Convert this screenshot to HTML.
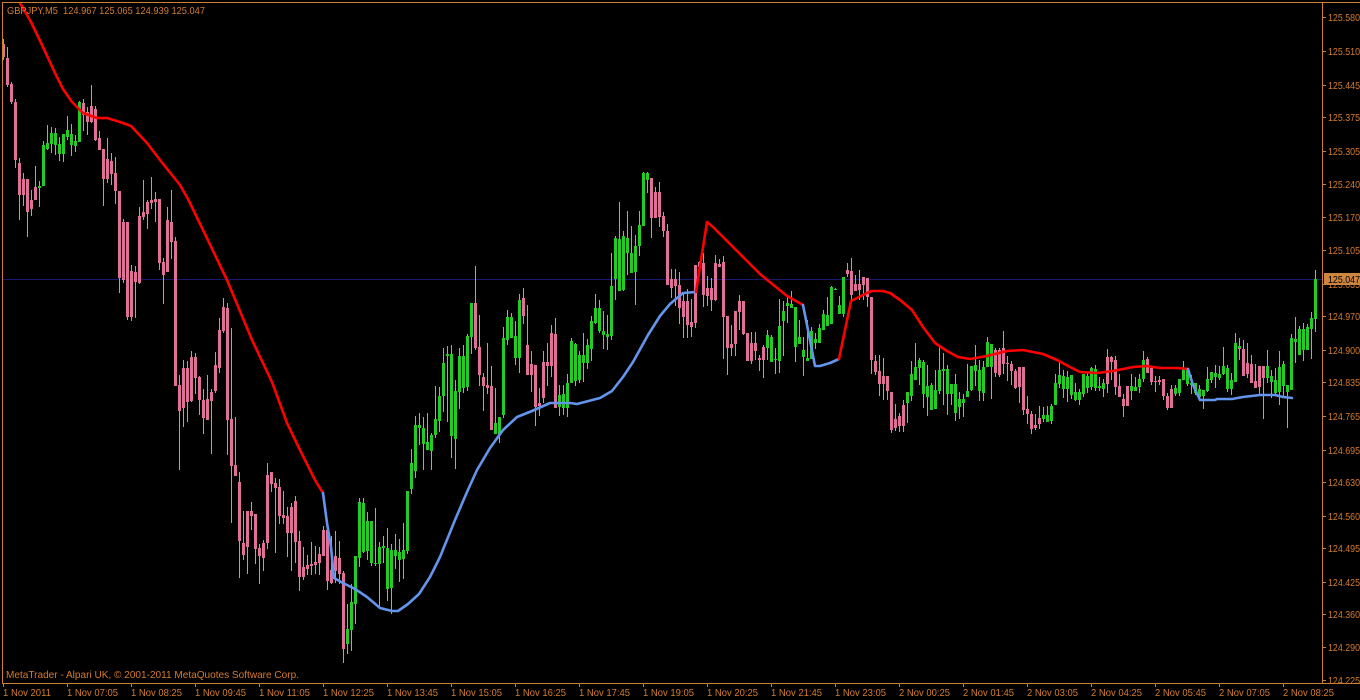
<!DOCTYPE html>
<html><head><meta charset="utf-8"><title>GBPJPY,M5</title>
<style>
html,body{margin:0;padding:0;background:#000;width:1360px;height:700px;overflow:hidden}
svg{display:block;position:absolute;left:0;top:0}
text{font-family:"Liberation Sans",sans-serif;font-size:10.5px;fill:#D67C2C}
.c{shape-rendering:crispEdges;fill:none}
</style></head><body>
<svg width="1360" height="700" viewBox="0 0 1360 700" xmlns="http://www.w3.org/2000/svg">
<rect width="1360" height="700" fill="#000"/>
<path class="c" stroke="#191970" stroke-width="1" d="M3 279.5H1322"/>
<path class="c" stroke="#DAA520" stroke-width="1" d="M3.5 39V60M7.5 47V87M11.5 82V104M15.5 99V168M19.5 158V220M23.5 173V206M27.5 179V237M31.5 190V216M35.5 166V200M39.5 181V207M43.5 141V186M47.5 125V150M51.5 127V153M55.5 128V155M59.5 137V161M63.5 134V162M67.5 116V140M71.5 124V156M75.5 135V152M79.5 101V142M83.5 99V131M87.5 107V135M91.5 85V123M95.5 106V141M99.5 131V150M103.5 149V206M107.5 138V183M111.5 153V185M115.5 157V204M119.5 191V293M123.5 219V283M127.5 222V320M131.5 265V321M135.5 266V318M139.5 207V284M143.5 180V220M147.5 200V229M151.5 177V209M155.5 192V222M159.5 199V270M163.5 258V304M167.5 207V272M171.5 190V259M175.5 237V386M179.5 375V470M183.5 360V427M187.5 361V422M191.5 351V402M195.5 353V394M199.5 376V415M203.5 389V434M207.5 375V420M211.5 389V454M215.5 352V393M219.5 318V373M223.5 298V333M227.5 303V455M231.5 328V523M235.5 417V476M239.5 472V578M243.5 511V560M247.5 511V574M251.5 502V530M255.5 514V564M259.5 544V584M263.5 540V571M267.5 463V549M271.5 472V492M275.5 478V553M279.5 479V524M283.5 491V524M287.5 507V557M291.5 503V571M295.5 496V563M299.5 531V591M303.5 547V580M307.5 555V575M311.5 542V575M315.5 546V574M319.5 547V575M323.5 526V556M327.5 526V590M331.5 536V584M335.5 531V583M339.5 541V584M343.5 571V663M347.5 604V654M351.5 584V651M355.5 556V624M359.5 498V567M363.5 498V553M367.5 512V560M371.5 521V566M375.5 508V566M379.5 542V608M383.5 536V563M387.5 528V601M391.5 544V614M395.5 534V569M399.5 539V582M403.5 523V579M407.5 491V554M411.5 449V494M415.5 416V478M419.5 413V445M423.5 417V470M427.5 413V450M431.5 433V470M435.5 386V438M439.5 387V432M443.5 348V412M447.5 346V422M451.5 345V458M455.5 380V469M459.5 348V409M463.5 345V393M467.5 334V391M471.5 303V354M475.5 266V350M479.5 315V386M483.5 373V411M487.5 343V394M491.5 366V430M495.5 388V434M499.5 417V443M503.5 327V418M507.5 310V345M511.5 313V338M515.5 321V365M519.5 294V373M523.5 288V324M527.5 305V375M531.5 351V392M535.5 365V426M539.5 388V416M543.5 351V403M547.5 343V386M551.5 325V377M555.5 318V408M559.5 385V416M563.5 385V415M567.5 374V417M571.5 338V383M575.5 343V386M579.5 351V383M583.5 333V382M587.5 339V369M591.5 316V361M595.5 294V324M599.5 300V333M603.5 311V349M607.5 315V350M611.5 253V340M615.5 236V300M619.5 202V291M623.5 231V291M627.5 211V275M631.5 226V273M635.5 235V305M639.5 211V256M643.5 172V226M647.5 172V193M651.5 178V238M655.5 187V218M659.5 182V227M663.5 212V237M667.5 224V285M671.5 269V298M675.5 269V306M679.5 272V324M683.5 292V338M687.5 289V338M691.5 299V337M695.5 265V328M699.5 261V270M703.5 253V307M707.5 276V306M711.5 278V311M715.5 255V301M719.5 259V267M723.5 256V359M727.5 316V375M731.5 325V356M735.5 311V356M739.5 295V330M743.5 301V335M747.5 333V361M751.5 332V364M755.5 332V360M759.5 355V371M763.5 345V378M767.5 330V360M771.5 335V362M775.5 348V374M779.5 299V373M783.5 301V356M787.5 295V323M791.5 291V308M795.5 307V362M799.5 320V344M803.5 337V376M807.5 320V361M811.5 327V359M815.5 333V349M819.5 324V343M823.5 310V330M827.5 297V326M831.5 286V324M835.5 288V290M839.5 296V314M843.5 277V317M847.5 263V277M851.5 258V300M855.5 275V291M859.5 270V300M863.5 277V300M867.5 278V307M871.5 297V374M875.5 355V375M879.5 355V396M883.5 358V400M887.5 376V400M891.5 392V433M895.5 404V431M899.5 413V432M903.5 400V432M907.5 392V423M911.5 361V401M915.5 343V380M919.5 358V385M923.5 360V408M927.5 365V416M931.5 383V410M935.5 370V409M939.5 346V394M943.5 353V405M947.5 365V415M951.5 384V405M955.5 374V421M959.5 392V419M963.5 394V417M967.5 364V397M971.5 366V391M975.5 345V386M979.5 360V401M983.5 361V401M987.5 337V367M991.5 344V399M995.5 348V377M999.5 348V377M1003.5 331V374M1007.5 356V381M1011.5 361V385M1015.5 369V389M1019.5 367V403M1023.5 367V415M1027.5 396V424M1031.5 411V434M1035.5 414V430M1039.5 406V429M1043.5 407V422M1047.5 406V422M1051.5 404V424M1055.5 374V405M1059.5 362V388M1063.5 370V398M1067.5 371V402M1071.5 375V399M1075.5 383V401M1079.5 389V405M1083.5 374V397M1087.5 373V393M1091.5 367V390M1095.5 365V391M1099.5 377V391M1103.5 379V397M1107.5 349V393M1111.5 356V380M1115.5 356V395M1119.5 374V397M1123.5 394V417M1127.5 386V406M1131.5 374V400M1135.5 377V391M1139.5 374V393M1143.5 351V382M1147.5 357V373M1151.5 366V385M1155.5 376V392M1159.5 376V385M1163.5 379V400M1167.5 393V410M1171.5 385V408M1175.5 385V396M1179.5 379V396M1183.5 361V380M1187.5 368V386M1191.5 375V394M1195.5 383V395M1199.5 385V401M1203.5 390V409M1207.5 367V392M1211.5 372V383M1215.5 365V388M1219.5 366V380M1223.5 347V375M1227.5 365V392M1231.5 373V395M1235.5 333V382M1239.5 338V360M1243.5 340V368M1247.5 343V378M1251.5 355V378M1255.5 364V386M1259.5 381V396M1263.5 366V419M1267.5 350V383M1271.5 370V398M1275.5 368V396M1279.5 351V405M1283.5 361V396M1287.5 385V428M1291.5 334V390M1295.5 317V363M1299.5 326V355M1303.5 323V361M1307.5 324V350M1311.5 312V359M1315.5 270V332"/>
<path class="c" stroke="#E0709A" stroke-width="3" d="M3.5 44V57M7.5 58V85M11.5 84V102M15.5 102V160M19.5 163V195M23.5 179V195M27.5 179V212M31.5 200V209M35.5 187V200M83.5 103V115M87.5 112V122M91.5 106V122M95.5 109V140M99.5 138V150M103.5 149V179M107.5 159V179M111.5 161V174M115.5 173V191M119.5 191V278M123.5 222V280M127.5 222V317M131.5 271V317M135.5 272V282M139.5 216V283M143.5 212V217M147.5 202V214M151.5 200V203M155.5 199V202M159.5 199V263M163.5 262V275M167.5 220V272M171.5 222V242M175.5 241V386M179.5 385V411M183.5 368V408M187.5 368V402M191.5 357V401M195.5 357V378M199.5 377V400M203.5 400V418M207.5 399V420M211.5 392V401M215.5 365V391M219.5 330V368M223.5 307V331M227.5 308V420M231.5 419V466M235.5 465V476M239.5 482V541M243.5 543V555M247.5 511V547M251.5 511V516M255.5 514V549M259.5 548V556M263.5 543V558M267.5 475V543M271.5 472V484M275.5 483V488M279.5 487V516M283.5 515V518M287.5 516V533M291.5 507V533M295.5 501V542M299.5 541V577M303.5 567V577M307.5 565V569M311.5 564V566M315.5 562V565M319.5 554V563M323.5 530V556M327.5 530V581M331.5 570V583M335.5 556V571M339.5 558V574M343.5 573V649M475.5 303V348M479.5 347V375M483.5 377V386M487.5 385V388M491.5 386V430M523.5 298V316M527.5 345V375M531.5 364V375M535.5 365V407M539.5 403V406M543.5 362V398M547.5 362V366M551.5 333V366M555.5 334V408M651.5 178V218M655.5 192V218M659.5 192V217M663.5 216V231M667.5 231V285M671.5 279V288M675.5 279V286M679.5 285V308M683.5 301V317M687.5 301V325M691.5 322V327M695.5 265V323M699.5 262V267M703.5 263V295M707.5 288V296M711.5 288V300M715.5 263V300M719.5 264V267M723.5 262V317M727.5 316V348M731.5 344V348M735.5 311V344M739.5 301V312M743.5 301V334M747.5 333V361M751.5 343V361M755.5 343V351M759.5 358V360M763.5 347V360M847.5 270V274M851.5 271V295M855.5 284V291M859.5 284V290M863.5 277V285M867.5 278V297M871.5 297V360M875.5 361V372M879.5 371V384M883.5 376V384M887.5 376V391M891.5 392V430M895.5 419V428M899.5 416V426M903.5 405V426M995.5 350V373M999.5 350V375M1003.5 348V364M1007.5 363V364M1011.5 364V371M1015.5 371V388M1019.5 367V387M1023.5 367V410M1027.5 409V414M1031.5 414V429M1035.5 425V428M1039.5 418V424M1107.5 357V384M1111.5 357V362M1115.5 360V387M1119.5 386V397M1123.5 399V406M1127.5 386V406M1147.5 359V373M1151.5 368V382M1155.5 381V382M1159.5 380V382M1163.5 379V396M1167.5 396V408M1171.5 389V408M1239.5 346V349M1243.5 349V376M1247.5 363V374M1251.5 364V383M1255.5 381V388M1259.5 366V387M1263.5 366V378"/>
<path class="c" stroke="#22CC22" stroke-width="3" d="M39.5 186V188M43.5 145V186M47.5 143V149M51.5 133V144M55.5 133V145M59.5 144V154M63.5 134V154M67.5 130V137M71.5 134V145M75.5 141V146M79.5 102V142M347.5 629V644M351.5 602V630M355.5 556V604M359.5 502V558M363.5 503V552M367.5 521V551M371.5 521V563M375.5 563V564M379.5 547V564M383.5 546V548M387.5 548V589M391.5 550V588M395.5 550V556M399.5 552V560M403.5 550V559M407.5 491V551M411.5 463V489M415.5 425V471M419.5 425V428M423.5 428V444M427.5 442V450M431.5 435V451M435.5 419V435M439.5 396V421M443.5 363V396M447.5 354V356M451.5 354V436M455.5 391V439M459.5 356V392M463.5 356V388M467.5 336V387M471.5 303V337M495.5 423V434M499.5 417V435M503.5 338V415M507.5 317V340M511.5 317V338M515.5 336V358M519.5 300V358M559.5 395V407M563.5 394V408M567.5 383V408M571.5 341V383M575.5 344V381M579.5 355V380M583.5 355V363M587.5 345V363M591.5 321V349M595.5 308V323M599.5 308V331M603.5 331V335M607.5 334V337M611.5 286V336M615.5 238V279M619.5 239V291M623.5 236V290M627.5 238V253M631.5 253V273M635.5 246V272M639.5 225V246M643.5 173V226M647.5 173V180M767.5 335V348M771.5 337V362M775.5 359V360M779.5 326V361M783.5 311V321M787.5 303V306M791.5 304V308M795.5 307V347M799.5 337V344M803.5 350V357M807.5 358V361M811.5 331V359M815.5 339V343M819.5 328V343M823.5 314V330M827.5 315V326M831.5 287V324M835.5 289V290M839.5 305V314M843.5 277V314M907.5 392V403M911.5 374V396M915.5 367V380M919.5 360V368M923.5 362V394M927.5 386V397M931.5 385V410M935.5 390V409M939.5 370V391M943.5 369V371M947.5 369V394M951.5 384V394M955.5 384V413M959.5 399V407M963.5 399V403M967.5 391V397M971.5 366V390M975.5 365V371M979.5 370V391M983.5 367V393M987.5 342V367M991.5 344V367M1043.5 415V419M1047.5 415V422M1051.5 406V421M1055.5 383V405M1059.5 375V384M1063.5 376V389M1067.5 377V389M1071.5 375V395M1075.5 392V400M1079.5 392V400M1083.5 374V394M1087.5 376V388M1091.5 368V387M1095.5 369V388M1099.5 386V388M1103.5 383V389M1131.5 386V391M1135.5 387V391M1139.5 379V387M1143.5 360V379M1175.5 388V394M1179.5 379V393M1183.5 369V380M1187.5 368V384M1191.5 383V385M1195.5 383V393M1199.5 389V397M1203.5 390V396M1207.5 379V391M1211.5 372V380M1215.5 373V377M1219.5 374V378M1223.5 366V374M1227.5 368V389M1231.5 380V389M1235.5 343V382M1239.5 346V348M1267.5 366V378M1271.5 376V382M1275.5 380V393M1279.5 367V392M1283.5 364V386M1287.5 385V392M1291.5 338V390M1295.5 339V342M1299.5 329V355M1303.5 329V350M1307.5 327V350M1311.5 318V329M1315.5 279V319"/>
<g fill="none" stroke-width="2.6" stroke-linejoin="round" stroke-linecap="round">
<path stroke="#FF0000" d="M20 3L31 22L43 47L55 73L63 89L72 102L83 113L97 118L107 118L120 122L131 126L147 143L160 160L180 185L188 199L203 230L227 280L252 340L272 382L287 423L300 450L315 480L323 493"/>
<path stroke="#6495ED" d="M323 493L327 523L331 547L334 578L343 583L355 589L367 597L380 608L392 611L398 611L408 604L419 594L430 577L440 557L455 520L467 492L477 470L490 448L503 430L517 417L532 411L550 403L570 403L577 404L600 398L612 391L623 377L633 362L648 335L660 316L670 304L683 293L696 292"/>
<path stroke="#FF0000" d="M696 292L707 222L713 227L745 259L760 274L787 296L803 305"/>
<path stroke="#6495ED" d="M803 305L808 330L815 366L820 366L830 363L839 359"/>
<path stroke="#FF0000" d="M839 359L851 301L867 293L872 291L883 291L890 293L900 300L912 310L923 327L935 343L947 351L958 357L970 359L987 356L1007 351L1023 350L1043 354L1057 360L1070 367L1080 372L1097 373L1113 371L1133 367L1147 366L1160 368L1178 368L1188 369"/>
<path stroke="#6495ED" d="M1188 369L1193 385L1200 400L1215 400L1217 399L1232 399L1243 397L1260 395L1275 395L1283 397L1292 398"/>
</g>
<path class="c" stroke="#CD7F32" stroke-width="1" d="M2.5 2V684M2 2.5H1360M2 683.5H1360M1322.5 2V684"/>
<path class="c" stroke="#CD7F32" stroke-width="1" d="M3.5 684V687M67.5 684V687M131.5 684V687M195.5 684V687M259.5 684V687M323.5 684V687M387.5 684V687M451.5 684V687M515.5 684V687M579.5 684V687M643.5 684V687M707.5 684V687M771.5 684V687M835.5 684V687M899.5 684V687M963.5 684V687M1027.5 684V687M1091.5 684V687M1155.5 684V687M1219.5 684V687M1283.5 684V687M1323 17.5H1326M1323 51.5H1326M1323 85.5H1326M1323 117.5H1326M1323 151.5H1326M1323 184.5H1326M1323 217.5H1326M1323 250.5H1326M1323 284.5H1326M1323 316.5H1326M1323 350.5H1326M1323 382.5H1326M1323 416.5H1326M1323 450.5H1326M1323 482.5H1326M1323 516.5H1326M1323 548.5H1326M1323 582.5H1326M1323 614.5H1326M1323 647.5H1326M1323 680.5H1326"/>
<text x="7" y="14" textLength="198" lengthAdjust="spacingAndGlyphs" xml:space="preserve">GBPJPY,M5  124.967 125.065 124.939 125.047</text>
<text x="6" y="678" textLength="293" lengthAdjust="spacingAndGlyphs">MetaTrader - Alpari UK, © 2001-2011 MetaQuotes Software Corp.</text>
<g>
<text x="1328" y="21" textLength="32" lengthAdjust="spacingAndGlyphs">125.580</text>
<text x="1328" y="55" textLength="32" lengthAdjust="spacingAndGlyphs">125.510</text>
<text x="1328" y="89" textLength="32" lengthAdjust="spacingAndGlyphs">125.445</text>
<text x="1328" y="121" textLength="32" lengthAdjust="spacingAndGlyphs">125.375</text>
<text x="1328" y="155" textLength="32" lengthAdjust="spacingAndGlyphs">125.305</text>
<text x="1328" y="188" textLength="32" lengthAdjust="spacingAndGlyphs">125.240</text>
<text x="1328" y="221" textLength="32" lengthAdjust="spacingAndGlyphs">125.170</text>
<text x="1328" y="254" textLength="32" lengthAdjust="spacingAndGlyphs">125.105</text>
<text x="1328" y="288" textLength="32" lengthAdjust="spacingAndGlyphs">125.035</text>
<text x="1328" y="320" textLength="32" lengthAdjust="spacingAndGlyphs">124.970</text>
<text x="1328" y="354" textLength="32" lengthAdjust="spacingAndGlyphs">124.900</text>
<text x="1328" y="386" textLength="32" lengthAdjust="spacingAndGlyphs">124.835</text>
<text x="1328" y="420" textLength="32" lengthAdjust="spacingAndGlyphs">124.765</text>
<text x="1328" y="454" textLength="32" lengthAdjust="spacingAndGlyphs">124.695</text>
<text x="1328" y="486" textLength="32" lengthAdjust="spacingAndGlyphs">124.630</text>
<text x="1328" y="520" textLength="32" lengthAdjust="spacingAndGlyphs">124.560</text>
<text x="1328" y="552" textLength="32" lengthAdjust="spacingAndGlyphs">124.495</text>
<text x="1328" y="586" textLength="32" lengthAdjust="spacingAndGlyphs">124.425</text>
<text x="1328" y="618" textLength="32" lengthAdjust="spacingAndGlyphs">124.360</text>
<text x="1328" y="651" textLength="32" lengthAdjust="spacingAndGlyphs">124.290</text>
<text x="1328" y="684" textLength="32" lengthAdjust="spacingAndGlyphs">124.225</text>
</g>
<rect x="1324" y="273" width="36" height="12" fill="#CD853F" shape-rendering="crispEdges"/>
<text x="1328" y="283" textLength="32" lengthAdjust="spacingAndGlyphs" style="fill:#000">125.047</text>
<g>
<text x="3" y="696" textLength="48" lengthAdjust="spacingAndGlyphs">1 Nov 2011</text>
<text x="67" y="696" textLength="51" lengthAdjust="spacingAndGlyphs">1 Nov 07:05</text>
<text x="131" y="696" textLength="51" lengthAdjust="spacingAndGlyphs">1 Nov 08:25</text>
<text x="195" y="696" textLength="51" lengthAdjust="spacingAndGlyphs">1 Nov 09:45</text>
<text x="259" y="696" textLength="51" lengthAdjust="spacingAndGlyphs">1 Nov 11:05</text>
<text x="323" y="696" textLength="51" lengthAdjust="spacingAndGlyphs">1 Nov 12:25</text>
<text x="387" y="696" textLength="51" lengthAdjust="spacingAndGlyphs">1 Nov 13:45</text>
<text x="451" y="696" textLength="51" lengthAdjust="spacingAndGlyphs">1 Nov 15:05</text>
<text x="515" y="696" textLength="51" lengthAdjust="spacingAndGlyphs">1 Nov 16:25</text>
<text x="579" y="696" textLength="51" lengthAdjust="spacingAndGlyphs">1 Nov 17:45</text>
<text x="643" y="696" textLength="51" lengthAdjust="spacingAndGlyphs">1 Nov 19:05</text>
<text x="707" y="696" textLength="51" lengthAdjust="spacingAndGlyphs">1 Nov 20:25</text>
<text x="771" y="696" textLength="51" lengthAdjust="spacingAndGlyphs">1 Nov 21:45</text>
<text x="835" y="696" textLength="51" lengthAdjust="spacingAndGlyphs">1 Nov 23:05</text>
<text x="899" y="696" textLength="51" lengthAdjust="spacingAndGlyphs">2 Nov 00:25</text>
<text x="963" y="696" textLength="51" lengthAdjust="spacingAndGlyphs">2 Nov 01:45</text>
<text x="1027" y="696" textLength="51" lengthAdjust="spacingAndGlyphs">2 Nov 03:05</text>
<text x="1091" y="696" textLength="51" lengthAdjust="spacingAndGlyphs">2 Nov 04:25</text>
<text x="1155" y="696" textLength="51" lengthAdjust="spacingAndGlyphs">2 Nov 05:45</text>
<text x="1219" y="696" textLength="51" lengthAdjust="spacingAndGlyphs">2 Nov 07:05</text>
<text x="1283" y="696" textLength="51" lengthAdjust="spacingAndGlyphs">2 Nov 08:25</text>
</g>
</svg>
</body></html>
